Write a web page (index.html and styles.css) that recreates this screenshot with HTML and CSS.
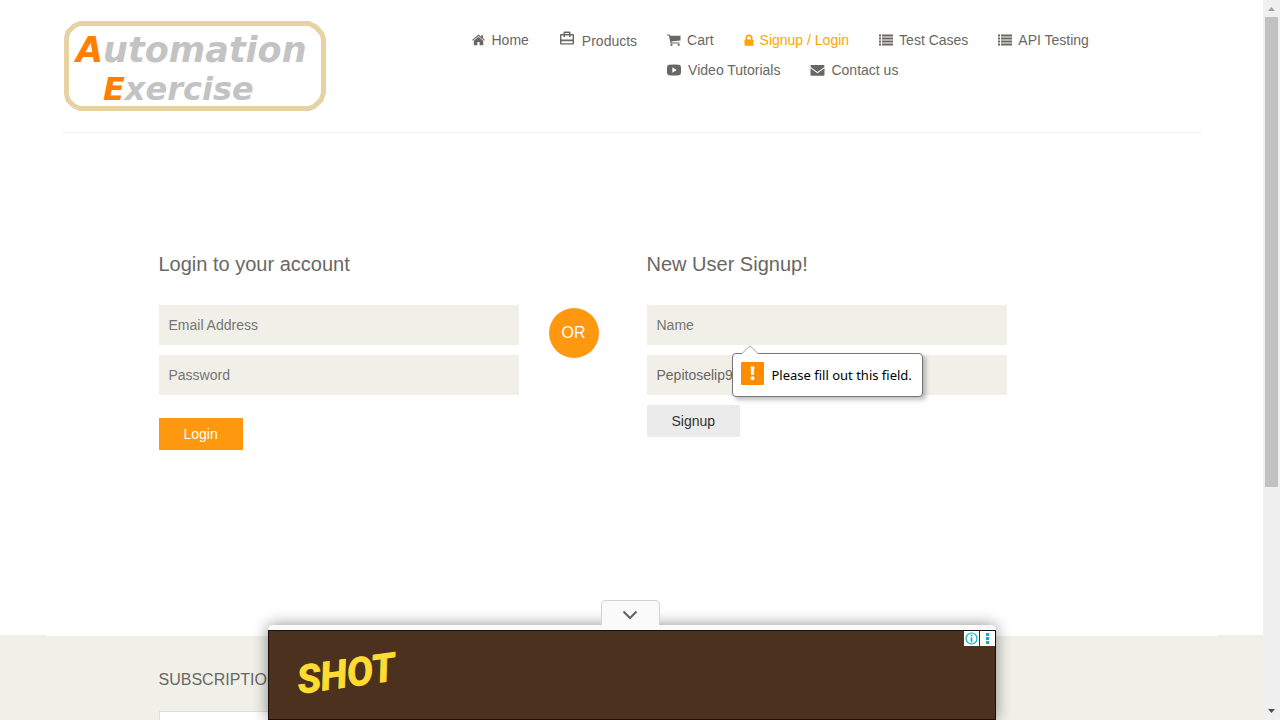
FILE: index.html
```html
<!DOCTYPE html>
<html lang="en">
<head>
<meta charset="utf-8">
<title>Automation Exercise - Signup / Login</title>
<link rel="stylesheet" href="styles.css">
</head>
<body>
<div class="page">
  <header class="container header">
    <a class="logo" href="#" aria-label="Automation Exercise">
      <svg width="262" height="90" viewBox="0 0 262 90">
        <path class="logo-frame" d="M16 2.500H245L252 6L258 13L259.500 18V72L257 79L250 85.500L245 87.500H16L10 85L4 79L2.500 73V17L4 11L10 5Z"/>
        <text class="logo-text" x="12" y="41"><tspan class="logo-cap">A</tspan>utomation</text>
        <text class="logo-text logo-text-second" x="39" y="79"><tspan class="logo-cap">E</tspan>xercise</text>
      </svg>
    </a>
    <nav class="nav">
      <ul>
        <li><a href="#"><svg class="icon" width="14" height="12" viewBox="0 0 14 12"><path d="M6.500 2.800L11.200 6.700V11.200H7.600V8H5.400V11.200H1.800V6.700ZM6.500.5L9.200 2.700V1.200H11V4.200L13 5.900L12.300 6.700L6.500 1.900L.7 6.700L0 5.900Z"/></svg>Home</a></li>
        <li class="tall"><a href="#"><svg class="icon icon-bag" width="17" height="15" viewBox="0 0 17 15"><path fill-rule="evenodd" d="M4.500 3V1.600Q4.500.5 5.600.5H10.400Q11.500.5 11.500 1.600V3H14Q15 3 15 4V12.500Q15 13.500 14 13.500H2Q1 13.500 1 12.500V4Q1 3 2 3ZM6 3H10V1.900H6ZM2.400 4.400V8.600H13.600V4.400H11.500V6H10V4.400H6V6H4.500V4.400ZM2.400 10.200V12.200H13.600V10.200Z"/></svg>Products</a></li>
        <li><a href="#"><svg class="icon" width="14" height="12" viewBox="0 0 14 12"><path d="M0 .5H2.700L3.100 1.700H13.500V6.500L4.400 7.600L4.600 8.500H12.500V9.500H3.500L3.300 8.200L1.900 1.500H0Z"/><circle cx="4.500" cy="10.800" r="1.100"/><circle cx="11.700" cy="10.800" r="1.100"/></svg>Cart</a></li>
        <li><a class="active" href="#"><svg class="icon" width="10" height="12" viewBox="0 0 10 12"><path fill-rule="evenodd" d="M1.500 5.500V4Q1.500.5 5 .5T8.500 4V5.500Q9.500 5.500 9.500 6.300V11Q9.500 11.800 8.700 11.800H1.300Q.5 11.800.5 11V6.300Q.5 5.500 1.500 5.500ZM3.200 5.500H6.800V4Q6.800 2.200 5 2.200T3.200 4Z"/></svg>Signup / Login</a></li>
        <li><a href="#"><svg class="icon" width="14" height="12" viewBox="0 0 14 12"><path d="M0 .5H2V2.500H0ZM3 .5H14V2.500H3ZM0 3.500H2V5.500H0ZM3 3.500H14V5.500H3ZM0 6.500H2V8.500H0ZM3 6.500H14V8.500H3ZM0 9.500H2V11.500H0ZM3 9.500H14V11.500H3Z"/></svg>Test Cases</a></li>
        <li><a href="#"><svg class="icon" width="14" height="12" viewBox="0 0 14 12"><path d="M0 .5H2V2.500H0ZM3 .5H14V2.500H3ZM0 3.500H2V5.500H0ZM3 3.500H14V5.500H3ZM0 6.500H2V8.500H0ZM3 6.500H14V8.500H3ZM0 9.500H2V11.500H0ZM3 9.500H14V11.500H3Z"/></svg>API Testing</a></li>
        <li><a href="#"><svg class="icon" width="15" height="12" viewBox="0 0 15 12"><path fill-rule="evenodd" d="M2 .8Q7 .2 12 .8Q13.900 1 14 3.200V8.800Q13.900 11 12 11.200Q7 11.800 2 11.200Q.1 11 0 8.800V3.200Q.1 1 2 .8ZM5.300 3.200V8.800L9.700 6Z"/></svg>Video Tutorials</a></li>
        <li><a href="#"><svg class="icon" width="15" height="12" viewBox="0 0 15 12"><path d="M.5 2Q.5 1 1.500 1H13.500Q14.500 1 14.500 2Q14.500 3 13.500 3.700L7.500 8L1.500 3.700Q.5 3 .5 2ZM.5 4.200L7.500 9.300L14.500 4.200V10.500Q14.500 11.800 13.500 11.800H1.500Q.5 11.800.5 10.500Z"/></svg>Contact us</a></li>
      </ul>
    </nav>
  </header>

  <main class="container forms">
    <form class="form">
      <h2>Login to your account</h2>
      <input type="email" placeholder="Email Address" aria-label="Email Address">
      <input type="password" placeholder="Password" aria-label="Password">
      <button class="btn btn-login" type="button">Login</button>
    </form>
    <div class="or">OR</div>
    <form class="form">
      <h2>New User Signup!</h2>
      <div class="field">
        <input type="text" placeholder="Name" aria-label="Name" aria-describedby="name-hint">
        <div class="hint" id="name-hint" role="alert">
          <svg class="hint-arrow" width="18" height="9" viewBox="0 0 18 9"><path d="M.5 9L9 .8L17.500 9"/></svg>
          <svg width="23" height="23" viewBox="0 0 23 23"><rect width="23" height="23" rx="1" fill="#ff8c00"/><path d="M9.600 4.500H13.400L12.900 13H10.100Z" fill="#fff"/><circle cx="11.500" cy="16.300" r="2" fill="#fff"/></svg>
          <span>Please fill out this field.</span>
        </div>
      </div>
      <input type="email" value="Pepitoselip9" aria-label="Email Address">
      <button class="btn btn-signup" type="button">Signup</button>
    </form>
  </main>

  <footer class="footer">
    <div class="container footer-inner">
      <h2>SUBSCRIPTION</h2>
      <input type="email" aria-label="Subscription email">
    </div>
  </footer>

  <aside class="ad">
    <button class="ad-toggle" type="button" aria-label="Hide advertisement"><svg width="16" height="10" viewBox="0 0 16 10"><path d="M1.500 1.500L8 8L14.500 1.500"/></svg></button>
    <div class="ad-body">
      <span class="ad-title">SHOT</span>
      <div class="ad-options">
        <button type="button" aria-label="Ad information"><svg width="15" height="15" viewBox="0 0 15 15"><circle cx="7.500" cy="7.500" r="5.500" fill="none" stroke="#00aecd" stroke-width="1.200"/><path d="M6.700 3.700H8.300V5.300H6.700ZM6.700 6.300H8.300V11.300H6.700Z" fill="#00aecd"/></svg></button>
        <button type="button" aria-label="Ad options"><svg width="15" height="15" viewBox="0 0 15 15"><path d="M6 2H9V5H6ZM6 6H9V9H6ZM6 10H9V13H6Z" fill="#00aecd"/></svg></button>
      </div>
    </div>
  </aside>
</div>
<div class="scrollbar" aria-hidden="true">
  <svg width="17" height="17" viewBox="0 0 17 17"><path d="M5 11L8.500 7L12 11Z" fill="#a3a3a3"/></svg>
  <div class="track"><div class="thumb"></div></div>
  <svg width="17" height="17" viewBox="0 0 17 17"><path d="M5 6L8.500 10L12 6Z" fill="#505050"/></svg>
</div>
</body>
</html>
```
FILE: styles.css
```css
* { box-sizing: border-box; }

body {
  margin: 0;
  height: 100vh;
  display: flex;
  overflow: hidden;
  background: #fff;
  color: #696763;
  font: 14px/20px "Liberation Sans", Arial, sans-serif;
}

h2 { margin: 0; font-weight: 400; }

button, input {
  font: inherit;
  border: 0;
  border-radius: 0;
}

.page {
  flex: 1;
  min-width: 0;
  position: relative;
  overflow: hidden;
}

.container {
  max-width: 1170px;
  margin: 0 auto;
}

.header {
  display: flex;
  max-width: 1140px;
  padding: 21px 0;
  border-bottom: 1px solid #f5f5f5;
}

.logo {
  margin-left: 2px;
  height: 90px;
}

.logo svg { display: block; }

.logo-frame {
  fill: #fff;
  stroke: #e6d2a3;
  stroke-width: 5;
}

.logo-text {
  fill: #c3c3c3;
  font: italic 700 35px "DejaVu Sans", sans-serif;
}

.logo-text-second { font-size: 32px; }

.logo-cap { fill: #ff8000; }

.nav {
  flex: 1;
  margin-left: 146px;
  padding-top: 4px;
}

.nav ul {
  margin: 0;
  padding: 0;
  list-style: none;
}

.nav li {
  float: left;
  height: 30px;
  padding-right: 30px;
  line-height: 30px;
}

.nav .tall {
  height: 32px;
  line-height: 32px;
}

.nav a {
  display: flex;
  align-items: center;
  gap: 6px;
  color: inherit;
  text-decoration: none;
}

.nav .active { color: #ffa500; }

.icon { fill: currentColor; }

.icon-bag { align-self: flex-start; margin-top: 6px; }

.forms {
  display: flex;
  padding: 116px 112px 0;
  height: 502px;
}

.form {
  width: 360px;
  display: flex;
  flex-direction: column;
  align-items: flex-start;
  gap: 10px;
}

.form h2 {
  margin-bottom: 16px;
  font-size: 20px;
  line-height: 30px;
}

.form input {
  width: 100%;
  height: 40px;
  padding: 0 10px;
  background: #f0f0e9;
  color: #696763;
}

.form input::placeholder { color: #757575; }

.btn {
  height: 32px;
  padding: 0 25px;
}

.btn-login {
  margin-top: 13px;
  background: #fe980f;
  color: #fff;
}

.btn-signup {
  background: #ebebeb;
  color: #333;
}

.or {
  width: 50px;
  height: 50px;
  margin: 59px 48px 0 30px;
  border-radius: 50%;
  background: #fe980f;
  color: #fff;
  font-size: 16px;
  line-height: 50px;
  text-align: center;
}

.field {
  position: relative;
  width: 100%;
}

.hint {
  position: absolute;
  top: 48px;
  left: 85px;
  display: flex;
  gap: 8px;
  height: 44px;
  padding: 8px 10px 8px 8px;
  border: 1px solid #767676;
  border-radius: 4px;
  background: #fff;
  box-shadow: 3px 3px 4px rgba(0, 0, 0, .25);
  color: #000;
  font: 13px/26px "Noto Sans", sans-serif;
  white-space: nowrap;
}

.hint-arrow {
  position: absolute;
  top: -9px;
  left: 8px;
  fill: #fff;
  stroke: #a0a0a0;
}

.footer { background: #f0f0e9; }

.footer-inner {
  padding: 34px 112px 40px;
  border-top: 1px solid #fff;
}

.footer h2 {
  margin-bottom: 21px;
  font-size: 16px;
}

.footer input {
  width: 300px;
  height: 40px;
  border: 1px solid #ddd;
  background: #fff;
}

.ad {
  position: absolute;
  bottom: 0;
  left: 50%;
  width: 728px;
  margin-left: -364px;
  padding-top: 5px;
  border-radius: 5px 5px 0 0;
  background: #fafafa;
  box-shadow: 0 0 15px rgba(0, 0, 0, .45);
}

.ad-toggle {
  position: absolute;
  bottom: 100%;
  left: 333px;
  width: 59px;
  height: 25px;
  padding: 4px 0 0;
  border: 1px solid #d2d2d2;
  border-bottom: 0;
  border-radius: 5px 5px 0 0;
  background: #fafafa;
}

.ad-toggle path {
  fill: none;
  stroke: #606060;
  stroke-width: 2;
}

.ad-body {
  display: flex;
  justify-content: space-between;
  align-items: flex-start;
  height: 90px;
  padding-left: 28px;
  border: 1px solid #1a110a;
  background: #4b311e;
}

.ad-title {
  margin-top: 17px;
  color: #ffdc32;
  font: italic 700 39px/52px Roboto, sans-serif;
  -webkit-text-stroke: 1px #ffdc32;
  transform: rotate(-8deg);
}

.ad-options {
  display: flex;
  gap: 1px;
}

.ad-options button {
  width: 15px;
  height: 15px;
  padding: 0;
  background: #fff;
}

.ad-options svg { display: block; }

.scrollbar {
  width: 17px;
  display: flex;
  flex-direction: column;
  background: #f0f0f0;
}

.track {
  flex: 1;
  padding: 0 2px;
}

.thumb {
  height: 68.5%;
  background: #c1c1c1;
}
```
